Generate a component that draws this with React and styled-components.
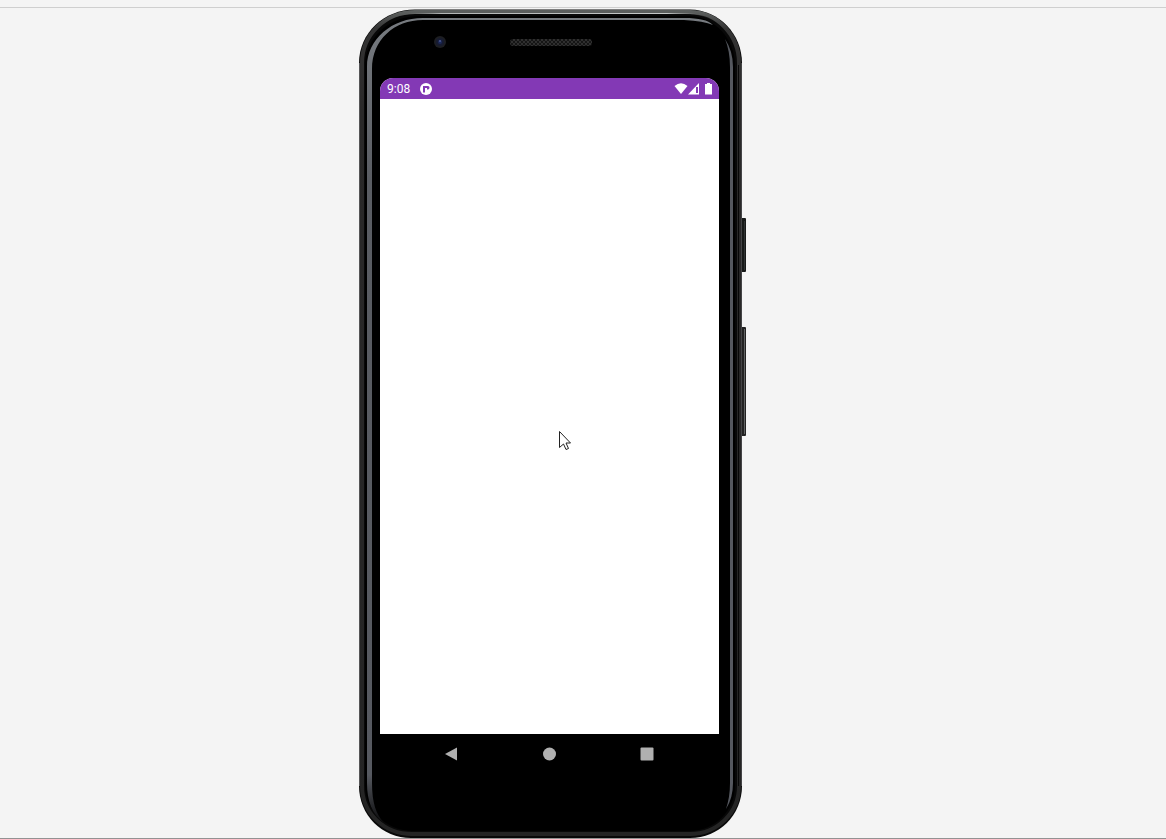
import React from "react";
import styled, { createGlobalStyle } from "styled-components";

const GlobalStyle = createGlobalStyle`
  *, *::before, *::after { box-sizing: border-box; }
  body { margin: 0; background: #f4f4f4; }
`;

const Page = styled.main`
  display: flex;
  flex-direction: column;
  min-height: 100vh;
  padding-top: 7px;
  border-bottom: 1px solid #929292;
  font-family: Roboto, "Noto Sans", sans-serif;
`;

const Divider = styled.hr`
  width: 100%;
  height: 1px;
  margin: 0 0 1px;
  border: 0;
  background: #cfcfcf;
`;

const Stage = styled.div`
  flex: 1;
  display: grid;
  grid-template-columns: 359fr 384px 423fr;
`;

const Phone = styled.section`
  grid-column: 2;
  position: relative;
  display: flex;
  flex-direction: column;
  padding: 0 24px 0 21px;
`;

const Chassis = styled.svg`
  position: absolute;
  inset: 0;
  width: 100%;
  height: 100%;
  overflow: visible;
`;

const Bezel = styled.div`
  position: relative;
  height: 69px;
  padding: 26px 0 0 53px;
  display: flex;
  align-items: flex-start;
  gap: 62px;
`;

const Screen = styled.div`
  position: relative;
  flex: 1;
  display: flex;
  flex-direction: column;
  min-height: 400px;
  overflow: hidden;
  background: #fff;
  border-radius: 13px 13px 0 0;
`;

const StatusBar = styled.header`
  display: flex;
  align-items: center;
  height: 21px;
  padding: 0 5px 0 7px;
  gap: 9px;
  background: #8339b5;
  color: #fff;
`;

const Clock = styled.time`
  font-size: 12px;
  line-height: 20px;
`;

const StatusIcons = styled.div`
  display: flex;
  margin-left: auto;
`;

const Content = styled.div`
  flex: 1;
  display: grid;
`;

const Pointer = styled.svg`
  position: absolute;
  left: 178px;
  top: 352px;
`;

const NavBar = styled.nav`
  position: relative;
  display: flex;
  align-items: center;
  justify-content: space-between;
  height: 40px;
  margin-bottom: 64px;
  padding: 0 65px;
`;

const NavButton = styled.button`
  display: flex;
  padding: 0;
  border: 0;
  background: none;
  color: #b0b0b0;
  cursor: pointer;
`;

const ChassisArt = () => (
  <Chassis viewBox="0 0 384 829" preserveAspectRatio="none" aria-hidden="true">
    <defs>
      <linearGradient id="rim" x1="0" y1="0" x2="0" y2="1">
        <stop offset="0" stopColor="#5c5f5e" />
        <stop offset="0.02" stopColor="#343434" />
        <stop offset="0.12" stopColor="#2a2929" />
        <stop offset="1" stopColor="#242424" />
      </linearGradient>
      <linearGradient id="topShine" x1="0" y1="0" x2="1" y2="0">
        <stop offset="0" stopColor="#444" stopOpacity="0" />
        <stop offset="0.15" stopColor="#b4b7b7" />
        <stop offset="0.85" stopColor="#c6c9c9" />
        <stop offset="1" stopColor="#444" stopOpacity="0" />
      </linearGradient>
      <linearGradient id="glintLeft" x1="0" y1="0" x2="0" y2="1">
        <stop offset="0" stopColor="#777b80" />
        <stop offset="0.2" stopColor="#5a5d63" />
        <stop offset="0.94" stopColor="#565960" />
        <stop offset="1" stopColor="#0b0b0c" />
      </linearGradient>
    </defs>
    <rect x="382" y="209" width="5" height="54" rx="1" fill="#171918" />
    <rect x="382" y="318" width="5" height="109" rx="1" fill="#222" />
    <path d="M385.500 320V425" stroke="#626464" />
    <path d="M385.500 212V261" stroke="#303333" />
    <path d="M56 0.500H331C360 1 383 25 383 54V777C383 806 360 829 331 829H52C23 829 0 806 0 777V54C0 24 25 0.500 56 0.500Z" fill="#080808" />
    <path d="M56 3H331C358 3 380 26 380 54V777C380 804 358 825 331 825H53C25 825 3 804 3 777V54C3 26 26 3 56 3Z" fill="none" stroke="url(#rim)" strokeWidth="4" />
    <path d="M0.500 54V777" stroke="#555557" />
    <path d="M382.500 54V777" stroke="#444446" />
    <path d="M379.500 56V777" stroke="#080808" />
    <path d="M60 7H331C356 8 376 30 376 57V776C376 802 356 822 330 822H54C28 822 6 802 6 776V57C6 29 30 7 60 7Z" fill="#000" />
    <path d="M34 9C42 5 50 4.500 60 4.500H326C338 4.500 348 7 356 13" fill="none" stroke="url(#topShine)" />
    <path d="M64 9H325C340 9 349 11 354 16Q345 12 325 11H64C35 11 13 31 13 60V774C13 794 17 805 25 814C13 805 8 792 8 774V58C8 30 33 9 64 9Z" fill="url(#glintLeft)" />
    <path d="M366 30Q374 42 374 58V774Q374 789 367 800Q371 788 371 774V58Q371 42 366 30Z" fill="#55585f" />
  </Chassis>
);

const Camera = () => (
  <svg width="14" height="14" viewBox="0 0 14 14" aria-hidden="true">
    <circle cx="7" cy="7" r="6" fill="#1d1e22" />
    <circle cx="7" cy="7" r="4" fill="#171b30" />
    <circle cx="7" cy="7" r="2" fill="#1b2859" />
    <circle cx="7" cy="6" r="1" fill="#4d5990" />
  </svg>
);

const Speaker = () => (
  <svg width="84" height="14" viewBox="0 0 84 14" aria-hidden="true">
    <defs>
      <pattern id="mesh" width="4" height="4" patternUnits="userSpaceOnUse">
        <rect width="4" height="4" fill="#151515" />
        <circle cx="1" cy="1" r="0.900" fill="#3b3b3b" />
        <circle cx="3" cy="3" r="0.900" fill="#3b3b3b" />
      </pattern>
    </defs>
    <rect x="1" y="4" width="82" height="7" rx="3" fill="url(#mesh)" />
  </svg>
);

const AppBadge = () => (
  <svg width="14" height="14" viewBox="0 0 14 14" aria-hidden="true">
    <circle cx="7" cy="7" r="6" fill="#fff" />
    <path d="M4 4H6V10.500H4ZM6 4H9Q10.500 4 10.500 5.500Q10.500 7.500 9 7.500H8V6H6Z" fill="#8339b5" />
  </svg>
);

const SystemIcons = () => (
  <svg width="40" height="14" viewBox="0 0 40 14" role="img" aria-label="Wi-Fi, mobile signal and battery">
    <path d="M0.500 4Q7 -1.500 13.500 4L7 12Z" fill="#fff" />
    <path d="M14 12.500L25 1V12.500Z" fill="#fff" />
    <path d="M22 5H24V11H22Z" fill="#8339b5" />
    <path d="M31 2H33V1H36V2H38V12.500H31Z" fill="#fff" />
  </svg>
);

export default function App() {
  return (
    <>
      <GlobalStyle />
      <Page>
        <Divider />
        <Stage>
          <Phone aria-label="Phone emulator">
            <ChassisArt />
            <Bezel>
              <Camera />
              <Speaker />
            </Bezel>
            <Screen>
              <StatusBar>
                <Clock>9:08</Clock>
                <AppBadge />
                <StatusIcons>
                  <SystemIcons />
                </StatusIcons>
              </StatusBar>
              <Content />
              <Pointer width="14" height="22" viewBox="0 0 14 22" aria-hidden="true">
                <path d="M1.500 1.500V17.500L5.500 14L8 19.500L10.500 18.500L8 13H12.500Z" fill="#fff" stroke="#222" />
              </Pointer>
            </Screen>
            <NavBar aria-label="System navigation">
              <NavButton type="button" aria-label="Back">
                <svg width="13" height="14" viewBox="0 0 13 14"><path d="M0 7L12 0.500V13.500Z" fill="currentColor" /></svg>
              </NavButton>
              <NavButton type="button" aria-label="Home">
                <svg width="13" height="14" viewBox="0 0 13 14"><circle cx="6.500" cy="7" r="6.500" fill="currentColor" /></svg>
              </NavButton>
              <NavButton type="button" aria-label="Overview">
                <svg width="14" height="14" viewBox="0 0 14 14"><rect x="0.500" y="0.500" width="13" height="13" rx="1" fill="currentColor" /></svg>
              </NavButton>
            </NavBar>
          </Phone>
        </Stage>
      </Page>
    </>
  );
}
